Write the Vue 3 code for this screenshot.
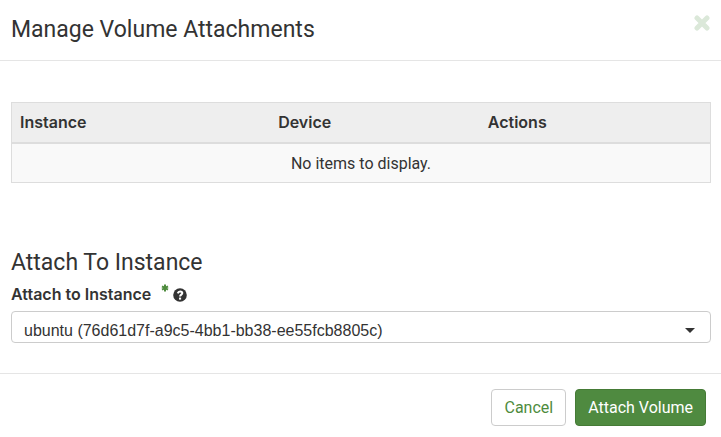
<script setup>
import { ref } from 'vue'

const columns = ['Instance', 'Device', 'Actions']
const instances = [
  { id: '76d61d7f-a9c5-4bb1-bb38-ee55fcb8805c', name: 'ubuntu' },
]
const selected = ref(instances[0].id)
</script>

<template>
  <form class="modal" @submit.prevent>
    <header class="modal-header">
      <h3 class="title">Manage Volume Attachments</h3>
      <button type="button" class="close" aria-label="Close">
        <svg viewBox="0 0 16 16" width="16" height="16" aria-hidden="true">
          <path d="M3 3L13 13M13 3L3 13" />
        </svg>
      </button>
    </header>

    <div class="modal-body">
      <table class="table">
        <thead>
          <tr>
            <th v-for="column in columns" :key="column" scope="col">{{ column }}</th>
          </tr>
        </thead>
        <tbody>
          <tr>
            <td :colspan="columns.length">No items to display.</td>
          </tr>
        </tbody>
      </table>

      <h3 class="title">Attach To Instance</h3>
      <div class="label-row">
        <label for="instance">Attach to Instance</label>
        <svg class="required" viewBox="0 0 8 8" width="8" height="8" aria-hidden="true">
          <path d="M4 0.6V7.4M1 2.3L7 5.7M7 2.3L1 5.7" />
        </svg>
        <svg class="help" viewBox="0 0 14 14" width="14" height="14" aria-hidden="true">
          <circle cx="7" cy="7" r="6.8" />
          <path d="M4.7 5.3C5.2 3.9 6.1 3.4 7.1 3.4C8.4 3.4 9.3 4.2 9.3 5.1C9.3 6.6 7.1 6.7 7.1 8.5" />
          <rect x="6" y="9.6" width="2.1" height="2" />
        </svg>
      </div>
      <div class="select-wrap">
        <select id="instance" v-model="selected" required>
          <option v-for="item in instances" :key="item.id" :value="item.id">{{ item.name }} ({{ item.id }})</option>
        </select>
        <svg class="caret" viewBox="0 0 10 5" width="10" height="5" aria-hidden="true">
          <path d="M0 0H10L5 5Z" />
        </svg>
      </div>
    </div>

    <footer class="modal-footer">
      <button type="button" class="btn">Cancel</button>
      <button type="submit" class="btn primary">Attach Volume</button>
    </footer>
  </form>
</template>

<style>
body {
  background: #fff;
}
</style>

<style scoped>
.modal,
.modal * {
  box-sizing: border-box;
}

.modal {
  color: #333;
  font: 16px/23px Roboto, "Liberation Sans", sans-serif;
}

.modal-header {
  display: flex;
  align-items: flex-start;
  justify-content: space-between;
  padding: 15px 11px;
  border-bottom: 1px solid #e5e5e5;
}

.title {
  margin: 0;
  font-size: 23px;
  font-weight: 400;
  line-height: 30px;
}

.close {
  display: flex;
  padding: 0;
  border: 0;
  background: none;
  cursor: pointer;
}

.close svg {
  fill: none;
  stroke: #dbe8d9;
  stroke-width: 5;
  stroke-linecap: round;
}

.modal-body {
  padding: 41px 10px 30px 11px;
}

.table {
  width: 100%;
  margin-bottom: 65px;
  border: 1px solid #ddd;
  border-collapse: collapse;
  table-layout: fixed;
}

th {
  padding: 8px;
  border-bottom: 2px solid #ddd;
  background: #eee;
  font-family: Inter, "Liberation Sans", sans-serif;
  font-weight: 600;
  text-align: left;
}

th:first-child {
  width: 37%;
}

th:nth-child(2) {
  width: 30%;
}

td {
  padding: 8px 8px 7px;
  background: #f9f9f9;
  text-align: center;
}

.label-row {
  display: flex;
  align-items: center;
  margin: 5px 0;
}

label {
  font-family: Inter, "Liberation Sans", sans-serif;
  font-weight: 600;
}

.required {
  align-self: flex-start;
  margin: 1px 4px 0 10px;
  fill: none;
  stroke: #4e8b3d;
  stroke-width: 2;
}

.help circle {
  fill: #333;
}

.help path {
  fill: none;
  stroke: #fff;
  stroke-width: 2;
}

.help rect {
  fill: #fff;
}

.select-wrap {
  position: relative;
}

select {
  display: block;
  width: 100%;
  height: 32px;
  padding: 7px 32px 0 12px;
  border: 1px solid #ccc;
  border-radius: 4px;
  appearance: none;
  background: #fff;
  color: #333;
  font: 16px/24px "Liberation Sans", Arial, sans-serif;
}

.caret {
  position: absolute;
  top: 17px;
  right: 16px;
  fill: #333;
  pointer-events: none;
}

.modal-footer {
  display: flex;
  justify-content: flex-end;
  gap: 9px;
  padding: 15px;
  border-top: 1px solid #e5e5e5;
}

.btn {
  padding: 6px 12px;
  border: 1px solid #ccc;
  border-radius: 4px;
  background: #fff;
  color: #4e8b3d;
  font: inherit;
  cursor: pointer;
}

.primary {
  border-color: #457b36;
  background: #4f8a40;
  color: #fff;
}
</style>
